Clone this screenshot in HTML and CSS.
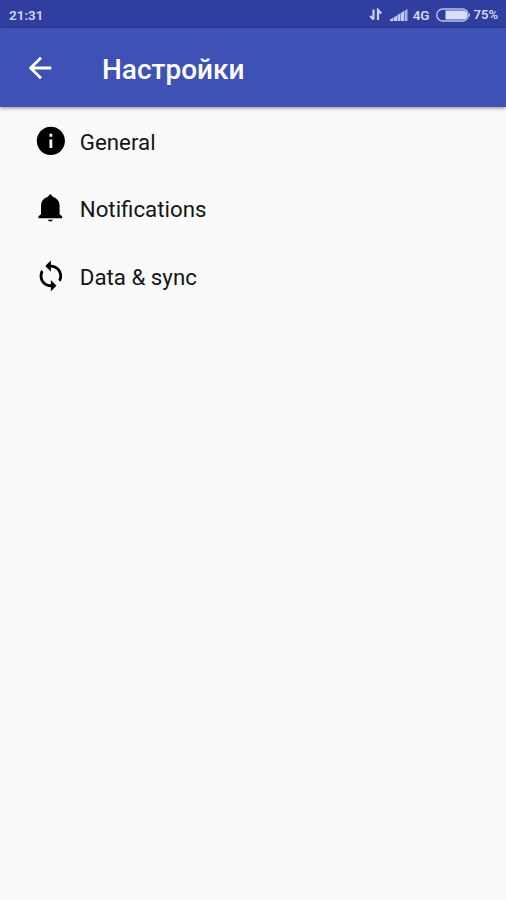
FILE: index.html
```html
<!DOCTYPE html>
<html lang="ru">
<head>
<meta charset="utf-8">
<title>Настройки</title>
<link rel="stylesheet" href="styles.css">
</head>
<body>
<div class="status">
  <span class="time">21:31</span>
  <svg class="data" width="14" height="14" viewBox="0 0 14 14"><path d="M4.500 1.500v10M1.200 8l3.300 3.500M9 12V2l3.200 3.500" fill="none" stroke="#c9cff5" stroke-width="2.200"/></svg>
  <svg class="signal" width="18" height="13" viewBox="0 0 18 13"><path d="M0 12V10.500L3.500 8.500V12zM4 12V8.200L7 6.400V12zM7.500 12V6L10.500 4.200V12zM11 12V3.900l3-1.800V12z" fill="#c4cbf2"/><path d="M14.500 12V1.800L17.500 0v12z" fill="#aab3e5"/></svg>
  <span class="net">4G</span>
  <svg class="battery" width="35" height="14" viewBox="0 0 35 14"><rect x=".8" y="1" width="31.500" height="12" rx="6" fill="none" stroke="#b9c1ee" stroke-width="1.400"/><path d="M9.500 2.500H27a4.500 4.500 0 0 1 0 9H9.500z" fill="#d9ddf8"/><path d="M33 4.800q2 2.200 0 4.400z" fill="#b9c1ee"/></svg>
  <span class="percent">75%</span>
</div>
<header class="toolbar">
  <svg class="back" viewBox="0 0 24 24"><path d="M20 11H7.830l5.590-5.590L12 4l-8 8 8 8 1.410-1.410L7.830 13H20v-2z" fill="#fff"/></svg>
  <h1>Настройки</h1>
</header>
<main>
  <div class="row">
    <svg viewBox="0 0 24 24"><path d="M12 2C6.480 2 2 6.480 2 12s4.480 10 10 10 10-4.480 10-10S17.520 2 12 2zm1 15h-2v-6h2v6zm0-8h-2V7h2v2z"/></svg>
    <span>General</span>
  </div>
  <div class="row">
    <svg viewBox="0 0 24 24"><path d="M9.800 20.500h3.700q-.4 1.200-1.850 1.200T9.800 20.500zM18.200 16.500V10.300c0-3-1.800-5-4.600-6L11.600 2.200 9.600 4.300c-2.800 1-4.600 3-4.600 6v6.200L3.200 18v1.300h16.800V18z"/></svg>
    <span>Notifications</span>
  </div>
  <div class="row">
    <svg viewBox="0 0 24 24"><path d="M12 4V1L8 5l4 4V6c3.310 0 6 2.690 6 6 0 1.010-.25 1.970-.7 2.800l1.460 1.460C19.540 15.030 20 13.570 20 12c0-4.420-3.580-8-8-8zm0 14c-3.310 0-6-2.690-6-6 0-1.010.25-1.970.7-2.800L5.240 7.740C4.460 8.970 4 10.430 4 12c0 4.420 3.580 8 8 8v3l4-4-4-4v3z"/></svg>
    <span>Data &amp; sync</span>
  </div>
</main>
</body>
</html>
```
FILE: styles.css
```css
* { box-sizing: border-box; }
body {
  margin: 0;
  min-height: 900px;
  background: #fafafa;
  font-family: Roboto, "Noto Sans", sans-serif;
  color: #151515;
}
.status {
  display: flex;
  align-items: center;
  height: 28px;
  padding: 2px 8px 0 9px;
  background: #303f9f;
  color: #d3d8f7;
  font-size: 13px;
  font-weight: 600;
  line-height: 16px;
}
.time { margin-right: auto; font-size: 13.500px; }
.data { margin-right: 7px; }
.signal { margin-right: 5px; }
.net { margin-right: 6px; font-size: 13.500px; }
.battery { margin-right: 3px; }
.toolbar {
  display: flex;
  align-items: center;
  height: 79px;
  padding: 2px 0 0 23px;
  background: #3f51b5;
  box-shadow: 0 1px 4px rgba(0, 0, 0, .45);
}
.back { width: 34px; height: 34px; margin-top: -2px; }
h1 {
  margin: 2px 0 0 45px;
  color: #fff;
  font-size: 28px;
  font-weight: 500;
  line-height: 34px;
}
.row {
  display: flex;
  align-items: center;
  height: 67.500px;
  padding-left: 34px;
  font-size: 22.300px;
}
.row svg { width: 33.750px; height: 33.750px; margin-right: 12px; }
.row span { padding-top: 1.500px; }
```
